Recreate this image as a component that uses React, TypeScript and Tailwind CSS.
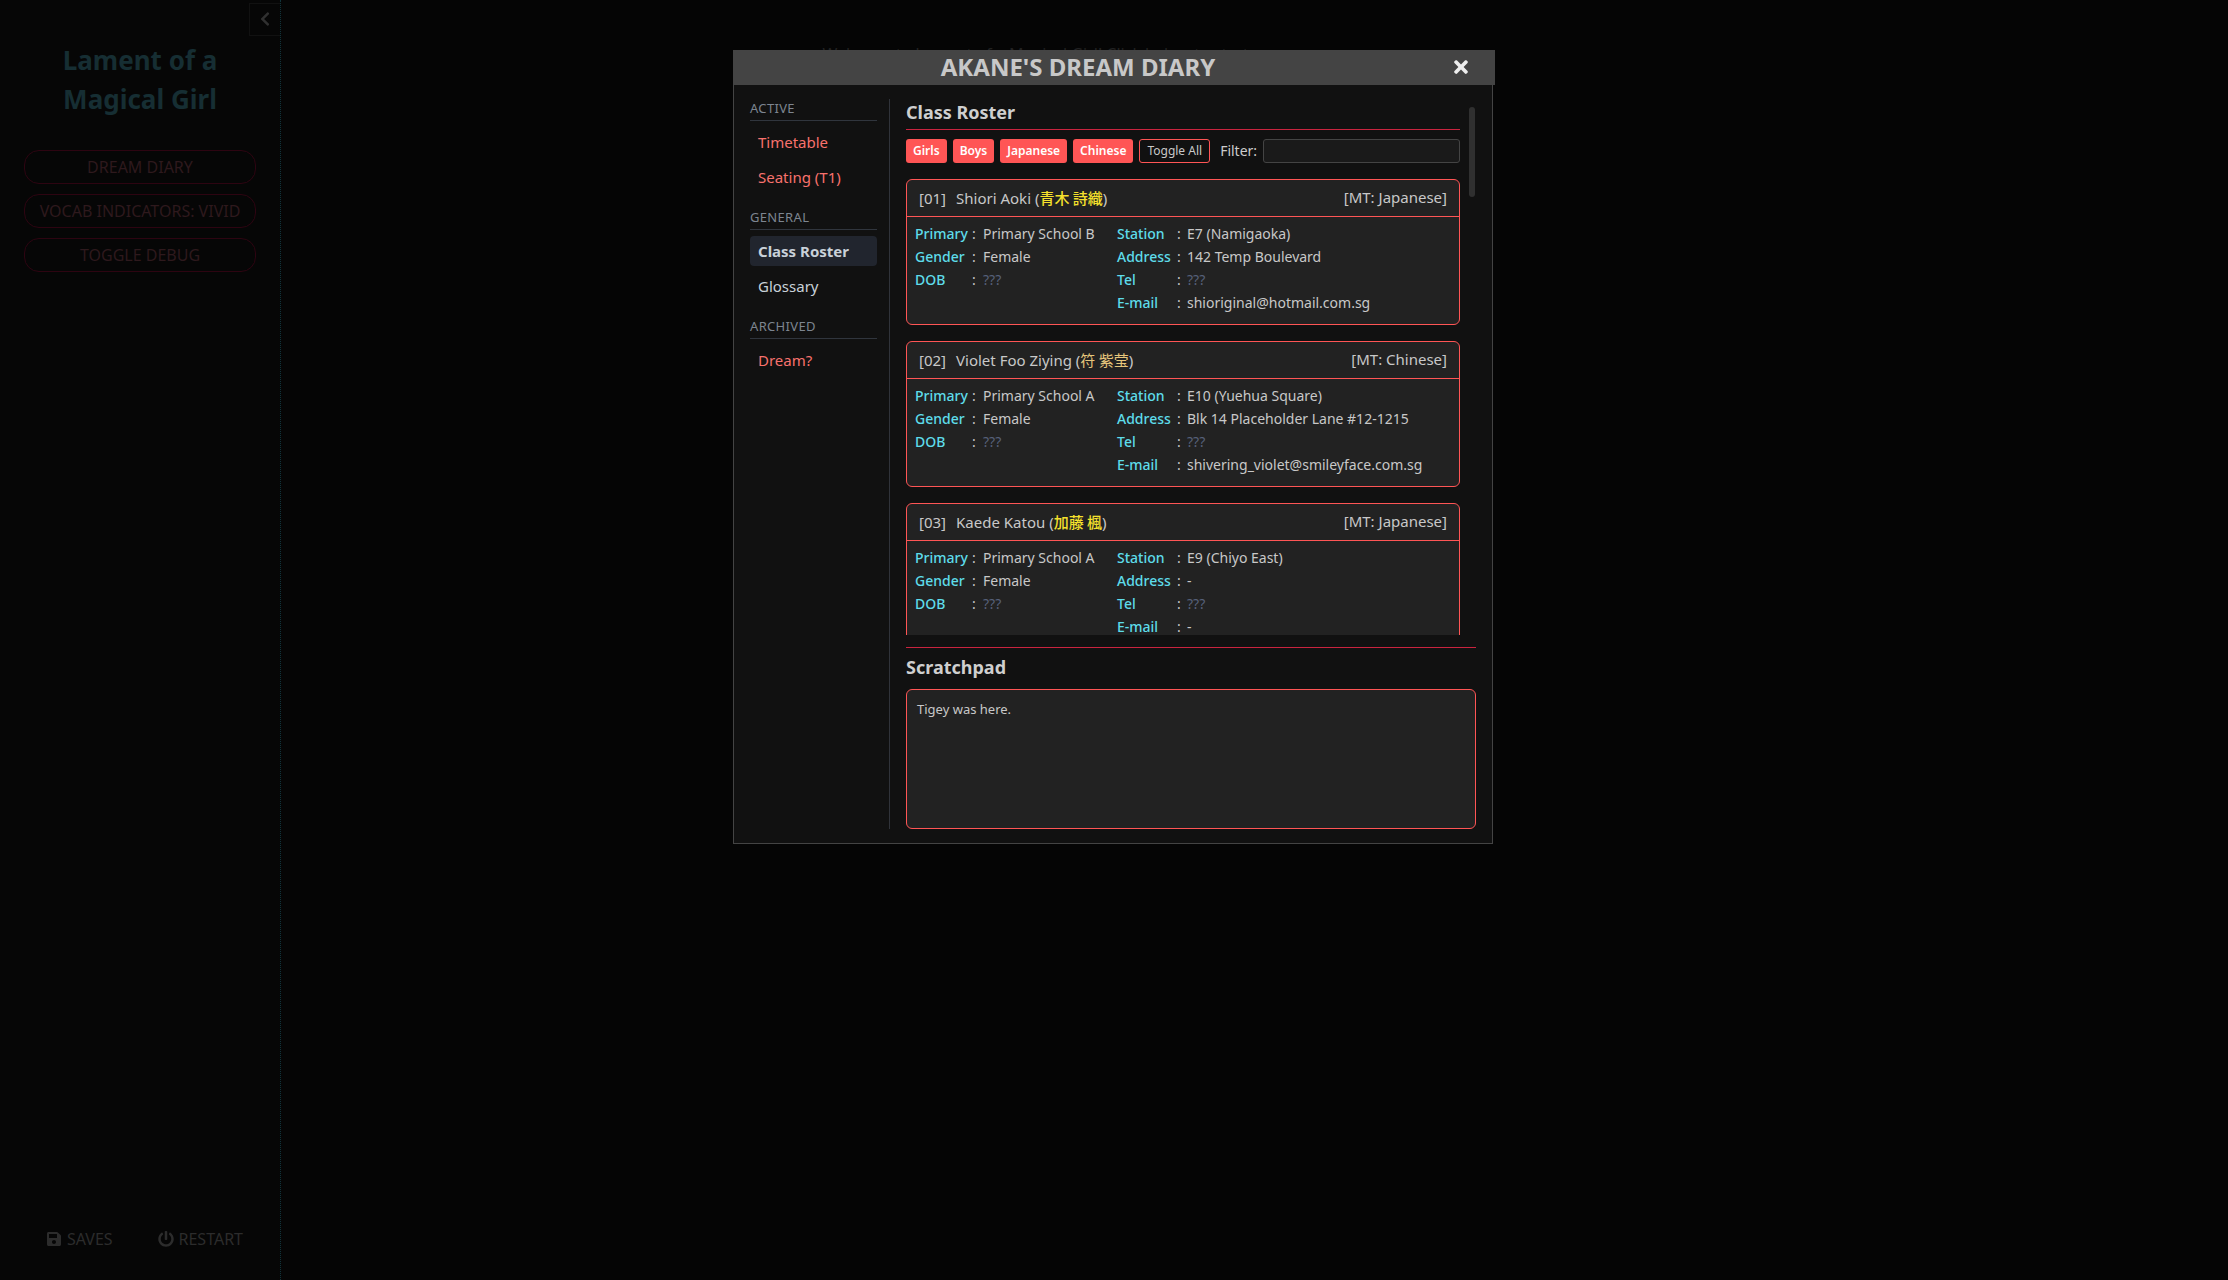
import { Fragment, useState } from 'react';
import { FaChevronLeft, FaPowerOff, FaSave, FaTimes } from 'react-icons/fa';

type Field = { label: string; value: string };

type Student = {
	no: string;
	name: string;
	native: string;
	tongue: 'Japanese' | 'Chinese';
	left: Field[];
	right: Field[];
};

const students: Student[] = [
	{
		no: '01',
		name: 'Shiori Aoki',
		native: '青木 詩織',
		tongue: 'Japanese',
		left: [
			{ label: 'Primary', value: 'Primary School B' },
			{ label: 'Gender', value: 'Female' },
			{ label: 'DOB', value: '???' },
		],
		right: [
			{ label: 'Station', value: 'E7 (Namigaoka)' },
			{ label: 'Address', value: '142 Temp Boulevard' },
			{ label: 'Tel', value: '???' },
			{ label: 'E-mail', value: 'shioriginal@hotmail.com.sg' },
		],
	},
	{
		no: '02',
		name: 'Violet Foo Ziying',
		native: '符 紫莹',
		tongue: 'Chinese',
		left: [
			{ label: 'Primary', value: 'Primary School A' },
			{ label: 'Gender', value: 'Female' },
			{ label: 'DOB', value: '???' },
		],
		right: [
			{ label: 'Station', value: 'E10 (Yuehua Square)' },
			{ label: 'Address', value: 'Blk 14 Placeholder Lane #12-1215' },
			{ label: 'Tel', value: '???' },
			{ label: 'E-mail', value: 'shivering_violet@smileyface.com.sg' },
		],
	},
	{
		no: '03',
		name: 'Kaede Katou',
		native: '加藤 楓',
		tongue: 'Japanese',
		left: [
			{ label: 'Primary', value: 'Primary School A' },
			{ label: 'Gender', value: 'Female' },
			{ label: 'DOB', value: '???' },
		],
		right: [
			{ label: 'Station', value: 'E9 (Chiyo East)' },
			{ label: 'Address', value: '-' },
			{ label: 'Tel', value: '???' },
			{ label: 'E-mail', value: '-' },
		],
	},
];

const navGroups = [
	{ title: 'Active', items: [ 'Timetable', 'Seating (T1)' ], fresh: true },
	{ title: 'General', items: [ 'Class Roster', 'Glossary' ], fresh: false },
	{ title: 'Archived', items: [ 'Dream?' ], fresh: true },
];

const filters = [ 'Girls', 'Boys', 'Japanese', 'Chinese' ];

function Sidebar() {
	return (
		<aside className="flex w-[281px] shrink-0 flex-col border-r border-dotted border-[#10333a] bg-[#060606]">
			<button
				aria-label="Collapse"
				className="mt-[3px] flex h-[33px] w-[31px] items-center justify-center self-end border border-r-0 border-[#111111] pb-0.5 text-base text-[#303030]"
			>
				<FaChevronLeft />
			</button>
			<h1 className="mt-[5px] px-12 text-center text-[26px] leading-[39px] font-bold text-[#162e33]">
				Lament of a Magical Girl
			</h1>
			<div className="mt-[31px] flex flex-col gap-2.5 px-6 text-base text-[#2e191d]">
				{ [ 'DREAM DIARY', 'VOCAB INDICATORS: VIVID', 'TOGGLE DEBUG' ].map( ( text ) => (
					<button key={ text } className="h-[34px] rounded-[15px] border border-[#2d0411] whitespace-nowrap">
						{ text }
					</button>
				) ) }
			</div>
			<div className="mt-auto mb-[29px] flex justify-between pr-[37px] pl-[46px] text-base text-[#2c2c2c]">
				<button className="flex items-center gap-[5px]">
					<FaSave />
					SAVES
				</button>
				<button className="flex items-center gap-[5px]">
					<FaPowerOff />
					RESTART
				</button>
			</div>
		</aside>
	);
}

function DiaryNav( { page, onSelect }: { page: string; onSelect: ( name: string ) => void } ) {
	return (
		<nav className="flex w-[140px] shrink-0 flex-col gap-4 border-r border-[#30333a] pr-3">
			{ navGroups.map( ( group ) => (
				<div key={ group.title }>
					<h2 className="mb-1.5 border-b border-[#30353d] pb-0.5 text-[13px] leading-[19px] tracking-wide text-[#7d8590] uppercase">
						{ group.title }
					</h2>
					<div className="flex flex-col gap-[5px]">
						{ group.items.map( ( item ) => (
							<button
								key={ item }
								onClick={ () => onSelect( item ) }
								className={
									item === page
										? 'h-[30px] rounded bg-[#21252e] px-2 text-left text-[15px] font-bold whitespace-nowrap text-[#c9d1d9]'
										: group.fresh
											? 'h-[30px] rounded px-2 text-left text-[15px] whitespace-nowrap text-[#f8716d]'
											: 'h-[30px] rounded px-2 text-left text-[15px] whitespace-nowrap text-[#c9d1d9]'
								}
							>
								{ item }
							</button>
						) ) }
					</div>
				</div>
			) ) }
		</nav>
	);
}

function Details( { fields, wide }: { fields: Field[]; wide?: boolean } ) {
	return (
		<dl
			className={
				wide
					? 'grid grid-cols-[60px_10px_auto] content-start leading-[23px]'
					: 'grid grid-cols-[57px_11px_auto] content-start leading-[23px]'
			}
		>
			{ fields.map( ( { label, value } ) => (
				<Fragment key={ label }>
					<dt className="font-medium text-[#5edcea]">{ label }</dt>
					<span>:</span>
					<dd className={ value === '???' ? 'text-[#566079]' : '' }>{ value }</dd>
				</Fragment>
			) ) }
		</dl>
	);
}

function StudentCard( { student }: { student: Student } ) {
	return (
		<article className="h-[146px] shrink-0 rounded-md border border-[#ff5555] bg-[#222222] text-sm whitespace-nowrap text-[#c8c8c8]">
			<header className="flex h-[37px] justify-between border-b border-[#ff5555] px-3 text-[15px]">
				<h3 className="flex gap-2.5 leading-9">
					<span>[{ student.no }]</span>
					<span>
						{ student.name } (
						<span
							className={
								student.tongue === 'Japanese'
									? 'font-["Noto_Sans_CJK_JP",sans-serif] font-medium text-[#f5e02c]'
									: 'font-["Noto_Sans_CJK_SC",sans-serif] text-[#e6c67c]'
							}
						>
							{ student.native }
						</span>
						)
					</span>
				</h3>
				<span className="leading-[34px]">[MT: { student.tongue }]</span>
			</header>
			<div className="grid grid-cols-[202px_auto] justify-start px-2 pt-[5px]">
				<Details fields={ student.left } />
				<Details fields={ student.right } wide />
			</div>
		</article>
	);
}

function Roster() {
	return (
		<section className="flex h-[536px] gap-2 overflow-hidden">
			<div className="flex min-w-0 flex-1 flex-col">
				<h2 className="border-b border-[#c9243f] pb-1 text-lg leading-[26px] font-bold text-[#cfcfcf]">Class Roster</h2>
				<div className="mt-[9px] mb-4 flex h-6 shrink-0 items-center gap-1.5 text-xs">
					{ filters.map( ( name ) => (
						<button key={ name } className="h-6 rounded-[3px] bg-[#ff5555] px-[7px] font-semibold text-white">
							{ name }
						</button>
					) ) }
					<button className="h-6 rounded-[3px] border border-[#ff5555] px-[7px] whitespace-nowrap text-[#c8c8c8]">
						Toggle All
					</button>
					<label htmlFor="filter" className="ml-1 text-sm text-[#cccccc]">
						Filter:
					</label>
					<input
						id="filter"
						className="h-6 min-w-0 flex-1 rounded-[3px] border border-[#444444] bg-[#1a1a1a] px-2 text-[#cccccc]"
					/>
				</div>
				<div className="flex flex-col gap-4">
					{ students.map( ( student ) => (
						<StudentCard key={ student.no } student={ student } />
					) ) }
				</div>
			</div>
			<div className="w-2">
				<div className="mx-auto mt-2 h-[90px] w-1.5 rounded-full bg-[#303030]" />
			</div>
		</section>
	);
}

function Diary() {
	const [ page, setPage ] = useState( 'Class Roster' );

	return (
		<div role="dialog" className="w-[762px]">
			<header className="flex h-[35px] items-center bg-[#444444] pr-6 pb-0.5">
				<h2 className="flex-1 pr-8 pl-1 text-center text-2xl font-bold text-[#c8c8c8]">AKANE'S DREAM DIARY</h2>
				<button aria-label="Close" className="text-xl text-[#eeeeee]">
					<FaTimes />
				</button>
			</header>
			<div className="mr-0.5 flex gap-4 border border-t-0 border-[#444444] bg-[#111111] px-4 py-3.5">
				<DiaryNav page={ page } onSelect={ setPage } />
				<div className="flex min-w-0 flex-1 flex-col">
					<Roster />
					<section className="mt-3 flex flex-col border-t border-[#c9243f]">
						<label htmlFor="scratchpad" className="pt-1.5 pb-2 text-lg leading-[27px] font-bold text-[#cfcfcf]">
							Scratchpad
						</label>
						<textarea
							id="scratchpad"
							defaultValue="Tigey was here."
							className="h-[140px] resize-none rounded-md border border-[#ff5555] bg-[#222222] px-2.5 py-[7px] text-[13px] leading-6 text-[#c8c8c8]"
						/>
					</section>
				</div>
			</div>
		</div>
	);
}

export default function App() {
	return (
		<div className='relative flex min-h-screen bg-[#050505] font-["Noto_Sans","Noto_Sans_CJK_JP",sans-serif]'>
			<Sidebar />
			<main className="flex-1 pt-[42px] text-base leading-6 text-[#222222]">
				<p className="mx-auto max-w-[864px]">Welcome to Lament of a Magical Girl! Click below to start.</p>
			</main>
			<div className="absolute inset-x-0 top-[50px] flex justify-center">
				<Diary />
			</div>
		</div>
	);
}
